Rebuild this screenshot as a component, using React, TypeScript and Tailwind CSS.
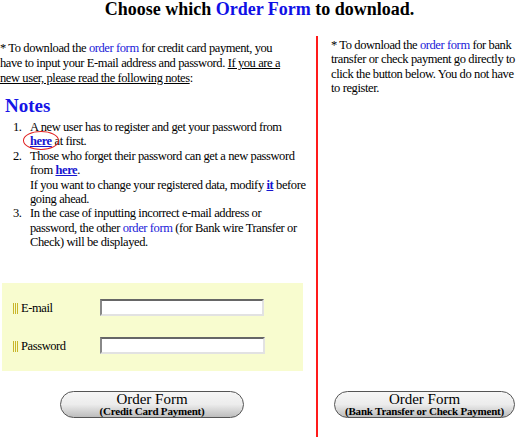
const serif = { fontFamily: '"Liberation Serif", "Times New Roman", serif' };

function Bars() {
    return (
        <span className="inline-flex items-center gap-[1px] mr-[3px]">
            <span className="w-[1px] h-[11px] bg-[#c9b62a]" />
            <span className="w-[1px] h-[11px] bg-[#c9b62a]" />
            <span className="w-[1px] h-[11px] bg-[#c9b62a]" />
        </span>
    );
}

function Field({ label, width }: { label: string; width: string }) {
    return (
        <div className="flex items-center h-[16px]">
            <div className="w-[98px] flex items-center pl-[11px] pt-[2px]">
                <Bars />
                <span>{label}</span>
            </div>
            <div className={`${width} h-[17px] bg-white border-2 border-t-[#666] border-l-[#888] border-b-[#e2e2e2] border-r-[#e2e2e2]`} />
        </div>
    );
}

function PillButton({ sub, width }: { sub: string; width: string }) {
    return (
        <button
            className={`${width} h-[27px] rounded-full border-[1.5px] border-[#555] bg-gradient-to-b from-[#f6f6f6] via-[#ececec] to-[#bdbdbd] flex flex-col items-center justify-center text-black tracking-normal`}
            style={serif}
        >
            <span className="text-[15px] leading-[13px] mt-[1px]">Order Form</span>
            <span className="text-[11px] font-bold leading-[11px] tracking-[-0.2px]">{sub}</span>
        </button>
    );
}

export default function App() {
    return (
        <div className="w-[519px] h-[437px] overflow-hidden bg-white text-black text-[12.5px] tracking-[-0.4px]" style={serif}>
            <h1 className="h-[36px] text-center font-bold text-[18px] leading-[18px] tracking-normal">
                Choose which <span className="text-[#1010e6]">Order Form</span> to download.
            </h1>
            <div className="flex h-[401px]">
                <div className="w-[318px] border-r-2 border-[#ff1a1a] flex flex-col pt-[5px] pb-[19px]">
                    <p className="w-[310px] leading-[15px] whitespace-nowrap">
                        * To download the <span className="text-[#2020d8]">order form</span> for credit card payment, you
                        <br />
                        have to input your E-mail address and password. <span className="underline">If you are a</span>
                        <br />
                        <span className="underline">new user, please read the following notes</span>:
                    </p>
                    <h2 className="pl-[5px] mt-[10px] text-[19px] leading-[20px] font-bold text-[#1515e6] tracking-normal">Notes</h2>
                    <ol className="mt-[4px] leading-[14.4px] whitespace-nowrap">
                        <li className="flex">
                            <span className="w-[30px] pl-[13px]">1.</span>
                            <span>
                                A new user has to register and get your password from
                                <br />
                                <span className="relative">
                                    <span className="font-bold underline text-[#1515d0]">here</span>
                                    <span className="absolute -left-[7px] -top-[3px] w-[36px] h-[19px] rounded-[50%] border border-[#e02020]" />
                                </span>{' '}
                                at first.
                            </span>
                        </li>
                        <li className="flex">
                            <span className="w-[30px] pl-[13px]">2.</span>
                            <span>
                                Those who forget their password can get a new password
                                <br />
                                from <span className="font-bold underline text-[#1515d0]">here</span>.
                                <br />
                                If you want to change your registered data, modify{' '}
                                <span className="font-bold underline text-[#1515d0]">it</span> before
                                <br />
                                going ahead.
                            </span>
                        </li>
                        <li className="flex">
                            <span className="w-[30px] pl-[13px]">3.</span>
                            <span>
                                In the case of inputting incorrect e-mail address or
                                <br />
                                password, the other <span className="text-[#2020d8]">order form</span> (for Bank wire Transfer or
                                <br />
                                Check) will be displayed.
                            </span>
                        </li>
                    </ol>
                    <div className="ml-[2px] mt-[33px] w-[301px] h-[88px] bg-[#f8fccf] pt-[17px] flex flex-col gap-[22px]">
                        <Field label="E-mail" width="w-[164px]" />
                        <Field label="Password" width="w-[165px]" />
                    </div>
                    <div className="mt-auto pl-[60px]">
                        <PillButton sub="(Credit Card Payment)" width="w-[184px]" />
                    </div>
                </div>
                <div className="flex-1 flex flex-col pl-[13px] pt-[2px] pb-[19px]">
                    <p className="leading-[14.4px] whitespace-nowrap">
                        * To download the <span className="text-[#2020d8]">order form</span> for bank
                        <br />
                        transfer or check payment go directly to
                        <br />
                        click the button below. You do not have
                        <br />
                        to register.
                    </p>
                    <div className="mt-auto pl-[3px]">
                        <PillButton sub="(Bank Transfer or Check Payment)" width="w-[181px]" />
                    </div>
                </div>
            </div>
        </div>
    );
}
